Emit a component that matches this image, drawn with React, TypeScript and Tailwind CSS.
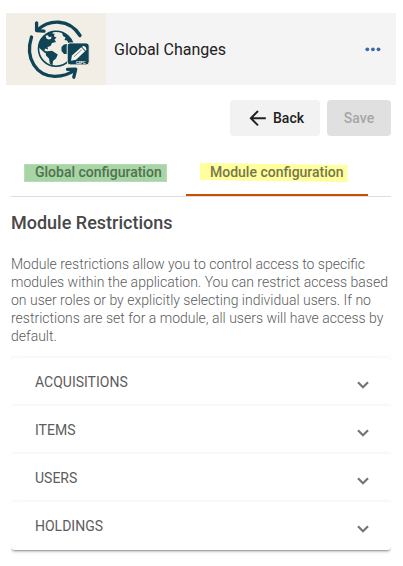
import React from "react";

const modules = ["ACQUISITIONS", "ITEMS", "USERS", "HOLDINGS"];

function Logo() {
  return (
    <svg viewBox="0 0 100 72" className="block h-[72px] w-[100px] bg-[#f2ede5]" fill="none">
      <g stroke="#0e4455" strokeWidth="3.3" strokeLinecap="round" strokeLinejoin="round">
        <path d="M31.500 17C43 6.500 63 5 74 22.500" />
        <path d="M30.600 9.800V17.600L38 18.200" />
        <path d="M25.500 24C18.500 46 31 63.500 49 63.300C57 63.200 63.500 61 69 57" />
        <path d="M61.500 56.300L69.700 56.200L67.800 64.200" />
      </g>
      <circle cx="50" cy="35.700" r="17.500" stroke="#0e4455" strokeWidth="1.600" />
      <path d="M32.500 34Q34 23 44 19L47 18.500L46.500 21L48.500 20.500L48 23.500L50.500 24.500L48.500 26.500L50 29L46 30L44.500 33L41.500 34L42 36.500L39 35.500L38.500 37.500L42 39.500L39 40L35 36.500Z" fill="#0e4455" />
      <path d="M39.500 22.800L42 22.300L43 24.300L45.500 23.500L45 26L42.500 26.500L40.500 25.500Z" fill="#f2ede5" />
      <path d="M39.500 38.500L46 37.800L51.800 41.500L50 45.500L47 48L46.500 52.500L43.800 50.500L43 45.500L40 42.500Z" fill="#0e4455" />
      <path d="M56 19.500Q64 22 67 30H62.500L61 27.500L58.500 27L59.500 24.500L57 23Z" fill="#0e4455" />
      <path d="M55.500 34L58 31.500L61.500 31V41H58L55.500 38Z" fill="#0e4455" />
      <rect x="61.200" y="29.900" width="22" height="22" rx="3" fill="#0e4455" stroke="#f2ede5" strokeWidth="1" />
      <g fill="#f8f5ee">
        <path d="M66 42.500L75.300 34.300L79 38.300L70 46.800L65 47.800Z" />
        <path d="M76 33.700L77.600 32.800Q80.500 34 80.500 36.800L79.700 37.700Z" />
      </g>
      <path d="M67.800 43.900L75.800 36.700" stroke="#0e4455" strokeWidth=".6" />
      <text x="70" y="50.500" fill="#f8f5ee" fontFamily="Roboto, sans-serif" fontSize="4" fontWeight="700" textLength="9.500">CSPC</text>
    </svg>
  );
}

export default function App() {
  return (
    <main className="h-[566px] w-[403px] overflow-hidden bg-white pt-[13px] font-['Roboto',sans-serif]">
      <header className="ml-1.5 flex h-[72px] w-[390px] items-center bg-[#f4f4f4]">
        <Logo />
        <h1 className="ml-2 flex-1 pt-0.5 text-base text-[#212121]">Global Changes</h1>
        <button aria-label="More options" className="mr-[15px] flex gap-[2px]">
          <svg width="16" height="6" viewBox="0 0 16 6" fill="#3f66b0">
            <circle cx="2.300" cy="3.300" r="1.900" />
            <circle cx="7.900" cy="3.300" r="1.900" />
            <circle cx="13.500" cy="3.300" r="1.900" />
          </svg>
        </button>
      </header>

      <div className="mt-[15px] mr-3 flex justify-end gap-[7px] text-sm font-medium">
        <button className="flex h-9 w-[90px] items-center rounded bg-[#f2f2f2] pl-[19px] text-[#212121]">
          <svg width="18" height="18" viewBox="0 0 18 18" fill="none" stroke="currentColor" strokeWidth="2" className="mr-1.5">
            <path d="M16.800 9.200H2.500M9 2L1.900 9.200L9 16.400" />
          </svg>
          Back
        </button>
        <button className="h-9 w-16 rounded bg-[#e0e0e0] text-[#a6a6a6]">Save</button>
      </div>

      <nav className="mx-[11px] mt-[13px] flex h-12 w-[380px] border-b border-[#dddddd] text-sm font-medium">
        <button className="flex h-[47px] w-[175px] items-center pl-[13px]">
          <span className="flex h-[18px] w-[143px] items-center border border-[#b7dcb5] bg-[#a8d5a5] pb-0.5 pl-2.5 text-[#50724f]">Global configuration</span>
        </button>
        <button className="flex h-[47px] w-[182px] items-center border-b-2 border-[#ca4f05] pt-0.5 pl-3.5">
          <span className="flex h-[19px] w-[149px] items-center bg-[#ffff9e] pb-0.5 pl-2.5 text-[#77774a] [clip-path:polygon(0_0,99%_10%,99%_100%,0_90%)]">Module configuration</span>
        </button>
      </nav>

      <section className="mx-[11px] w-[380px]">
        <h2 className="mt-3 text-lg leading-7 font-medium text-[#484848]">Module Restrictions</h2>
        <p className="mt-[18px] text-sm leading-[18px] font-light text-[#5c5c5c]">
          Module restrictions allow you to control access to specific<br />
          modules within the application. You can restrict access based<br />
          on user roles or by explicitly selecting individual users. If no<br />
          restrictions are set for a module, all users will have access by<br />
          default.
        </p>
        <div className="mt-2 overflow-hidden pt-[5px] pb-2">
          {modules.map((module) => (
            <button
              key={module}
              className="flex h-12 w-full items-center justify-between bg-white pr-[22px] pl-6 text-sm text-[#5c5c5c] shadow-[0_3px_1px_-2px_rgba(0,0,0,0.2),0_2px_2px_0_rgba(0,0,0,0.14),0_1px_5px_0_rgba(0,0,0,0.12)] first:rounded-t last:rounded-b"
            >
              {module}
              <svg width="12" height="8" viewBox="0 0 12 8" fill="none" stroke="#757575" strokeWidth="2.200" className="mt-1.5">
                <path d="M1 1.300L6 6.200L11 1.300" />
              </svg>
            </button>
          ))}
        </div>
      </section>
    </main>
  );
}
